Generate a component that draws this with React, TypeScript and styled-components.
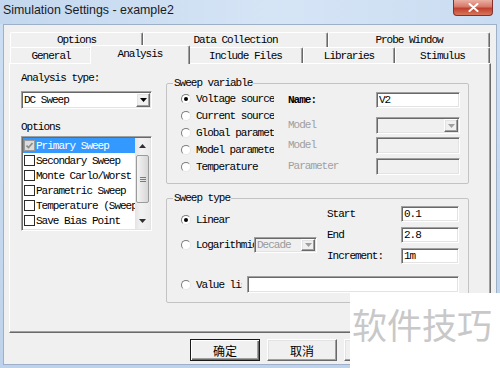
import styled, { createGlobalStyle, css } from "styled-components";

const GlobalStyle = createGlobalStyle`
  html, body {
    margin: 0;
    padding: 0;
    background: #fff;
  }
  body {
    width: 500px;
    height: 368px;
    overflow: hidden;
  }
`;

const mono = `"Liberation Mono", "DejaVu Sans Mono", monospace`;
const cjk = `"Noto Sans CJK SC", "Noto Sans", sans-serif`;

// classic 3d borders
const sunken = css`
  border-style: solid;
  border-width: 1px;
  border-color: #a0a0a0 #ffffff #ffffff #a0a0a0;
  box-shadow: inset 1px 1px 0 #696969, inset -1px -1px 0 #e3e3e3;
`;

const raised = css`
  border-style: solid;
  border-width: 1px;
  border-color: #ffffff #696969 #696969 #ffffff;
  box-shadow: inset -1px -1px 0 #a0a0a0, inset 1px 1px 0 #e3e3e3;
`;

const Window = styled.div`
  position: relative;
  width: 500px;
  height: 368px;
  box-sizing: border-box;
  display: flex;
  flex-direction: column;
  background: linear-gradient(180deg, #cddff3 0%, #bed3eb 100%);
  font-family: ${mono};
  font-size: 11px;
  letter-spacing: -1px;
  color: #000;
`;

const TitleBar = styled.div`
  height: 24px;
  flex: none;
  display: flex;
  align-items: flex-start;
  padding-left: 3px;
  background: linear-gradient(90deg, #c3d7ee 0%, #d6e5f6 55%, #cadcf1 100%);
`;

const Title = styled.span`
  font-family: "Liberation Sans", Arial, sans-serif;
  font-size: 12.4px;
  letter-spacing: 0;
  line-height: 20px;
  color: #1b1b1b;
`;

const CloseButton = styled.div`
  margin-left: auto;
  margin-right: 7px;
  width: 40px;
  height: 16px;
  box-sizing: border-box;
  border: 1px solid #83312a;
  border-top: none;
  border-radius: 0 0 4px 4px;
  background: linear-gradient(180deg, #eab0a2 0%, #d7786a 45%, #c0402c 55%, #d9765c 100%);
  display: flex;
  align-items: center;
  justify-content: center;
`;

const Client = styled.div`
  flex: 1;
  margin: 0 3px 3px;
  border: 1px solid #9db0c7;
  background: #f0f0f0;
  padding: 7px 5px 0 5px;
  display: flex;
  flex-direction: column;
`;

const TabRow = styled.div<{ $h: number }>`
  display: flex;
  height: ${(p) => p.$h}px;
  padding: 0 1px;
`;

const Tab = styled.div<{ $w: number; $active?: boolean }>`
  width: ${(p) => (p.$active ? p.$w + 4 : p.$w)}px;
  box-sizing: border-box;
  background: #f0f0f0;
  border-top: 1px solid #ffffff;
  border-left: 1px solid #ffffff;
  border-right: 1px solid #696969;
  box-shadow: inset -1px 0 0 #a0a0a0;
  border-radius: 2px 2px 0 0;
  display: flex;
  align-items: center;
  justify-content: center;
  white-space: nowrap;
  ${(p) =>
    p.$active &&
    css`
      position: relative;
      z-index: 1;
      height: 19px;
      margin: -2px -2px 0;
      padding-bottom: 3px;
    `}
`;

const Page = styled.div`
  height: 270px;
  box-sizing: border-box;
  border-style: solid;
  border-width: 1px;
  border-color: #ffffff #696969 #696969 #ffffff;
  box-shadow: inset -1px -1px 0 #a0a0a0;
  display: flex;
  gap: 14px;
  padding-left: 11px;
`;

const LeftCol = styled.div`
  width: 131px;
  display: flex;
  flex-direction: column;
`;

const RightCol = styled.div`
  width: 303px;
  display: flex;
  flex-direction: column;
  gap: 7px;
  padding-top: 12px;
`;

const FieldLabel = styled.div<{ $mt: number }>`
  line-height: 14px;
  margin-top: ${(p) => p.$mt}px;
  white-space: nowrap;
`;

const Combo = styled.div<{ $w: number; $h: number; $mt?: number; $disabled?: boolean }>`
  width: ${(p) => p.$w}px;
  height: ${(p) => p.$h}px;
  margin-top: ${(p) => p.$mt ?? 0}px;
  box-sizing: border-box;
  flex: none;
  ${sunken};
  background: ${(p) => (p.$disabled ? "#f0f0f0" : "#ffffff")};
  color: ${(p) => (p.$disabled ? "#9a9a9a" : "#000")};
  display: flex;
  align-items: center;
  padding-left: 2px;
`;

const ComboText = styled.span`
  flex: 1;
  white-space: nowrap;
  overflow: hidden;
`;

const DropButton = styled.span`
  width: 14px;
  align-self: stretch;
  margin: 1px 1px 1px 0;
  box-sizing: border-box;
  ${raised};
  background: #f0f0f0;
  display: flex;
  align-items: center;
  justify-content: center;
`;

const ListBox = styled.div`
  margin-top: 2px;
  height: 95px;
  box-sizing: border-box;
  ${sunken};
  background: #ffffff;
  padding: 1px;
  display: flex;
`;

const ListItems = styled.div`
  flex: 1;
  min-width: 0;
  display: flex;
  flex-direction: column;
`;

const ListItem = styled.div<{ $selected?: boolean }>`
  height: 15px;
  flex: none;
  display: flex;
  align-items: center;
  gap: 1px;
  padding-left: 1px;
  white-space: nowrap;
  overflow: hidden;
  background: ${(p) => (p.$selected ? "#3399ff" : "transparent")};
  color: ${(p) => (p.$selected ? "#ffffff" : "#000")};
`;

const CheckBox = styled.span<{ $checked?: boolean }>`
  width: 11px;
  height: 11px;
  flex: none;
  box-sizing: border-box;
  border: 1px solid ${(p) => (p.$checked ? "#9a9a9a" : "#2b2b2b")};
  background: ${(p) => (p.$checked ? "#dcdcdc" : "#ffffff")};
  display: flex;
  align-items: center;
  justify-content: center;
`;

const ScrollBar = styled.div`
  width: 15px;
  flex: none;
  background: linear-gradient(90deg, #e4e4e4, #f2f2f2 40%, #eaeaea);
  display: flex;
  flex-direction: column;
`;

const ScrollArrow = styled.div`
  height: 16px;
  flex: none;
  display: flex;
  align-items: center;
  justify-content: center;
`;

const ScrollTrack = styled.div`
  flex: 1;
  padding: 1px 1px 0;
`;

const ScrollThumb = styled.div`
  height: 48px;
  box-sizing: border-box;
  border: 1px solid #9b9b9b;
  border-radius: 2px;
  background: linear-gradient(90deg, #f4f4f4, #e2e2e2 60%, #d6d6d6);
  display: flex;
  flex-direction: column;
  align-items: center;
  justify-content: center;
  gap: 1px;
`;

const Grip = styled.span`
  width: 6px;
  height: 1px;
  background: #7a7a7a;
`;

const Group = styled.fieldset<{ $h: number }>`
  margin: 0;
  padding: 0;
  height: ${(p) => p.$h}px;
  box-sizing: border-box;
  min-width: 0;
  border: 1px solid #c3c3c3;
  border-radius: 2px;
`;

const Legend = styled.legend`
  margin-left: 6px;
  padding: 0 1px;
  line-height: 14px;
`;

const VarBody = styled.div`
  display: flex;
  padding: 0 0 0 14px;
`;

const RadioList = styled.div`
  width: 107px;
  display: flex;
  flex-direction: column;
`;

const RadioItem = styled.div<{ $h?: number }>`
  height: ${(p) => p.$h ?? 17}px;
  display: flex;
  align-items: center;
  gap: 5px;
  flex: none;
`;

const RadioDot = styled.span<{ $checked?: boolean }>`
  width: 10px;
  height: 10px;
  flex: none;
  box-sizing: border-box;
  border-radius: 50%;
  border: 1px solid;
  border-color: #7c7c7c #e6e6e6 #e6e6e6 #7c7c7c;
  background: #ffffff;
  display: flex;
  align-items: center;
  justify-content: center;
  &::after {
    content: "";
    width: 4px;
    height: 4px;
    border-radius: 50%;
    background: #000;
    display: ${(p) => (p.$checked ? "block" : "none")};
  }
`;

const RadioText = styled.span<{ $w: number }>`
  width: ${(p) => p.$w}px;
  overflow: hidden;
  white-space: nowrap;
`;

const FieldGrid = styled.div<{ $cols: string; $rows: string; $gap?: number; $mt?: number }>`
  display: grid;
  grid-template-columns: ${(p) => p.$cols};
  grid-template-rows: ${(p) => p.$rows};
  row-gap: ${(p) => p.$gap ?? 0}px;
  margin-top: ${(p) => p.$mt ?? 0}px;
  align-items: start;
`;

const GridLabel = styled.span<{ $muted?: boolean; $bold?: boolean }>`
  line-height: 16px;
  white-space: nowrap;
  color: ${(p) => (p.$muted ? "#a0a0a0" : "#000")};
  font-weight: ${(p) => (p.$bold ? "bold" : "normal")};
`;

const TextBox = styled.input<{ $w: number; $h: number; $disabled?: boolean }>`
  width: ${(p) => p.$w}px;
  height: ${(p) => p.$h}px;
  box-sizing: border-box;
  margin: 0;
  padding: 0 2px;
  ${sunken};
  outline: none;
  background: ${(p) => (p.$disabled ? "#f0f0f0" : "#ffffff")};
  font: inherit;
  letter-spacing: inherit;
  color: #000;
`;

const TypeBody = styled.div`
  display: flex;
  flex-direction: column;
  padding: 1px 0 0 14px;
`;

const TypeTop = styled.div`
  display: flex;
`;

const TypeLeft = styled.div`
  width: 146px;
  display: flex;
  flex-direction: column;
  gap: 9px;
  padding-top: 6px;
`;

const LogRow = styled.div`
  height: 16px;
  display: flex;
  align-items: center;
`;

const LogText = styled.span`
  width: 58px;
  margin-left: 5px;
  overflow: hidden;
  white-space: nowrap;
`;

const ValueRow = styled.div`
  display: flex;
  align-items: center;
  gap: 5px;
  margin-top: 12px;
`;

const ButtonRow = styled.div`
  display: flex;
  justify-content: flex-end;
  gap: 7px;
  margin-top: 6px;
`;

const DlgButton = styled.div<{ $default?: boolean }>`
  width: 70px;
  height: 22px;
  box-sizing: border-box;
  background: #f0f0f0;
  font-family: ${cjk};
  font-size: 12px;
  letter-spacing: 0;
  display: flex;
  align-items: center;
  justify-content: center;
  border-style: solid;
  border-width: 1px;
  border-color: ${(p) => (p.$default ? "#1a1a1a" : "#ffffff #696969 #696969 #ffffff")};
  box-shadow: ${(p) =>
    p.$default
      ? "inset 1px 1px 0 #ffffff, inset -1px -1px 0 #696969, inset -2px -2px 0 #a0a0a0"
      : "inset -1px -1px 0 #a0a0a0, inset 1px 1px 0 #e3e3e3"};
`;

const Watermark = styled.div`
  position: absolute;
  left: 350px;
  top: 293px;
  width: 150px;
  height: 75px;
  box-sizing: border-box;
  padding: 13px 0 0 2px;
  background: #ffffff;
  color: #c8c8c8;
  font-family: ${cjk};
  font-size: 35px;
  line-height: 1;
  letter-spacing: 0;
  white-space: nowrap;
`;

const Triangle = ({ color = "#000" }: { color?: string }) => (
  <svg width="7" height="4" viewBox="0 0 7 4">
    <polygon points="0,0 7,0 3.5,4" fill={color} />
  </svg>
);

const UpTriangle = () => (
  <svg width="7" height="4" viewBox="0 0 7 4">
    <polygon points="0,4 7,4 3.5,0" fill="#303030" />
  </svg>
);

const topTabs = [
  { label: "Options", w: 133 },
  { label: "Data Collection", w: 185 },
  { label: "Probe Window", w: 162 },
];

const bottomTabs = [
  { label: "General", w: 82 },
  { label: "Analysis", w: 96, active: true },
  { label: "Include Files", w: 115 },
  { label: "Libraries", w: 92 },
  { label: "Stimulus", w: 95 },
];

const options = [
  { label: "Primary Sweep", checked: true, selected: true },
  { label: "Secondary Sweep" },
  { label: "Monte Carlo/Worst Case" },
  { label: "Parametric Sweep" },
  { label: "Temperature (Sweep)" },
  { label: "Save Bias Point" },
];

const sweepVars = [
  { label: "Voltage source", checked: true },
  { label: "Current source" },
  { label: "Global parameter" },
  { label: "Model parameter" },
  { label: "Temperature" },
];

export default function App() {
  return (
    <>
      <GlobalStyle />
      <Window>
        <TitleBar>
          <Title>Simulation Settings - example2</Title>
          <CloseButton>
            <svg width="11" height="9" viewBox="0 0 11 9">
              <path d="M1.5 1 L9.5 8 M9.5 1 L1.5 8" stroke="#fff" strokeWidth="2" strokeLinecap="round" />
            </svg>
          </CloseButton>
        </TitleBar>
        <Client>
          <TabRow $h={15}>
            {topTabs.map((t) => (
              <Tab key={t.label} $w={t.w}>
                {t.label}
              </Tab>
            ))}
          </TabRow>
          <TabRow $h={16}>
            {bottomTabs.map((t) => (
              <Tab key={t.label} $w={t.w} $active={t.active}>
                {t.label}
              </Tab>
            ))}
          </TabRow>
          <Page>
            <LeftCol>
              <FieldLabel $mt={7}>Analysis type:</FieldLabel>
              <Combo $w={131} $h={18} $mt={6}>
                <ComboText>DC Sweep</ComboText>
                <DropButton>
                  <Triangle />
                </DropButton>
              </Combo>
              <FieldLabel $mt={11}>Options</FieldLabel>
              <ListBox>
                <ListItems>
                  {options.map((o) => (
                    <ListItem key={o.label} $selected={o.selected}>
                      <CheckBox $checked={o.checked}>
                        {o.checked && (
                          <svg width="7" height="7" viewBox="0 0 7 7">
                            <path d="M0.5 3.5 L2.5 5.5 L6.5 1" stroke="#8a8a8a" strokeWidth="1.6" fill="none" />
                          </svg>
                        )}
                      </CheckBox>
                      {o.label}
                    </ListItem>
                  ))}
                </ListItems>
                <ScrollBar>
                  <ScrollArrow>
                    <UpTriangle />
                  </ScrollArrow>
                  <ScrollTrack>
                    <ScrollThumb>
                      <Grip />
                      <Grip />
                      <Grip />
                    </ScrollThumb>
                  </ScrollTrack>
                  <ScrollArrow>
                    <Triangle color="#303030" />
                  </ScrollArrow>
                </ScrollBar>
              </ListBox>
            </LeftCol>

            <RightCol>
              <Group $h={108}>
                <Legend>Sweep variable</Legend>
                <VarBody>
                  <RadioList>
                    {sweepVars.map((v) => (
                      <RadioItem key={v.label}>
                        <RadioDot $checked={v.checked} />
                        <RadioText $w={78}>{v.label}</RadioText>
                      </RadioItem>
                    ))}
                  </RadioList>
                  <FieldGrid $cols="88px 84px" $rows="25px 20px 21px 16px" $mt={2}>
                    <GridLabel $bold>Name:</GridLabel>
                    <TextBox $w={84} $h={16} defaultValue="V2" />
                    <GridLabel $muted>Model</GridLabel>
                    <Combo $w={84} $h={17} $disabled>
                      <ComboText />
                      <DropButton>
                        <Triangle color="#a0a0a0" />
                      </DropButton>
                    </Combo>
                    <GridLabel $muted>Model</GridLabel>
                    <TextBox $w={84} $h={17} $disabled readOnly />
                    <GridLabel $muted>Parameter</GridLabel>
                    <TextBox $w={84} $h={17} $disabled readOnly />
                  </FieldGrid>
                </VarBody>
              </Group>

              <Group $h={112}>
                <Legend>Sweep type</Legend>
                <TypeBody>
                  <TypeTop>
                    <TypeLeft>
                      <RadioItem $h={16}>
                        <RadioDot $checked />
                        <RadioText $w={60}>Linear</RadioText>
                      </RadioItem>
                      <LogRow>
                        <RadioDot />
                        <LogText>Logarithmic</LogText>
                        <Combo $w={63} $h={16} $disabled>
                          <ComboText>Decade</ComboText>
                          <DropButton>
                            <Triangle color="#a0a0a0" />
                          </DropButton>
                        </Combo>
                      </LogRow>
                    </TypeLeft>
                    <FieldGrid $cols="74px 58px" $rows="16px 16px 16px" $gap={5}>
                      <GridLabel>Start</GridLabel>
                      <TextBox $w={58} $h={16} defaultValue="0.1" />
                      <GridLabel>End</GridLabel>
                      <TextBox $w={58} $h={16} defaultValue="2.8" />
                      <GridLabel>Increment:</GridLabel>
                      <TextBox $w={58} $h={16} defaultValue="1m" />
                    </FieldGrid>
                  </TypeTop>
                  <ValueRow>
                    <RadioDot />
                    <RadioText $w={46}>Value list</RadioText>
                    <TextBox $w={212} $h={17} readOnly />
                  </ValueRow>
                </TypeBody>
              </Group>
            </RightCol>
          </Page>
          <ButtonRow>
            <DlgButton $default>确定</DlgButton>
            <DlgButton>取消</DlgButton>
            <DlgButton>应用</DlgButton>
            <DlgButton>帮助</DlgButton>
          </ButtonRow>
        </Client>
        <Watermark>软件技巧</Watermark>
      </Window>
    </>
  );
}
